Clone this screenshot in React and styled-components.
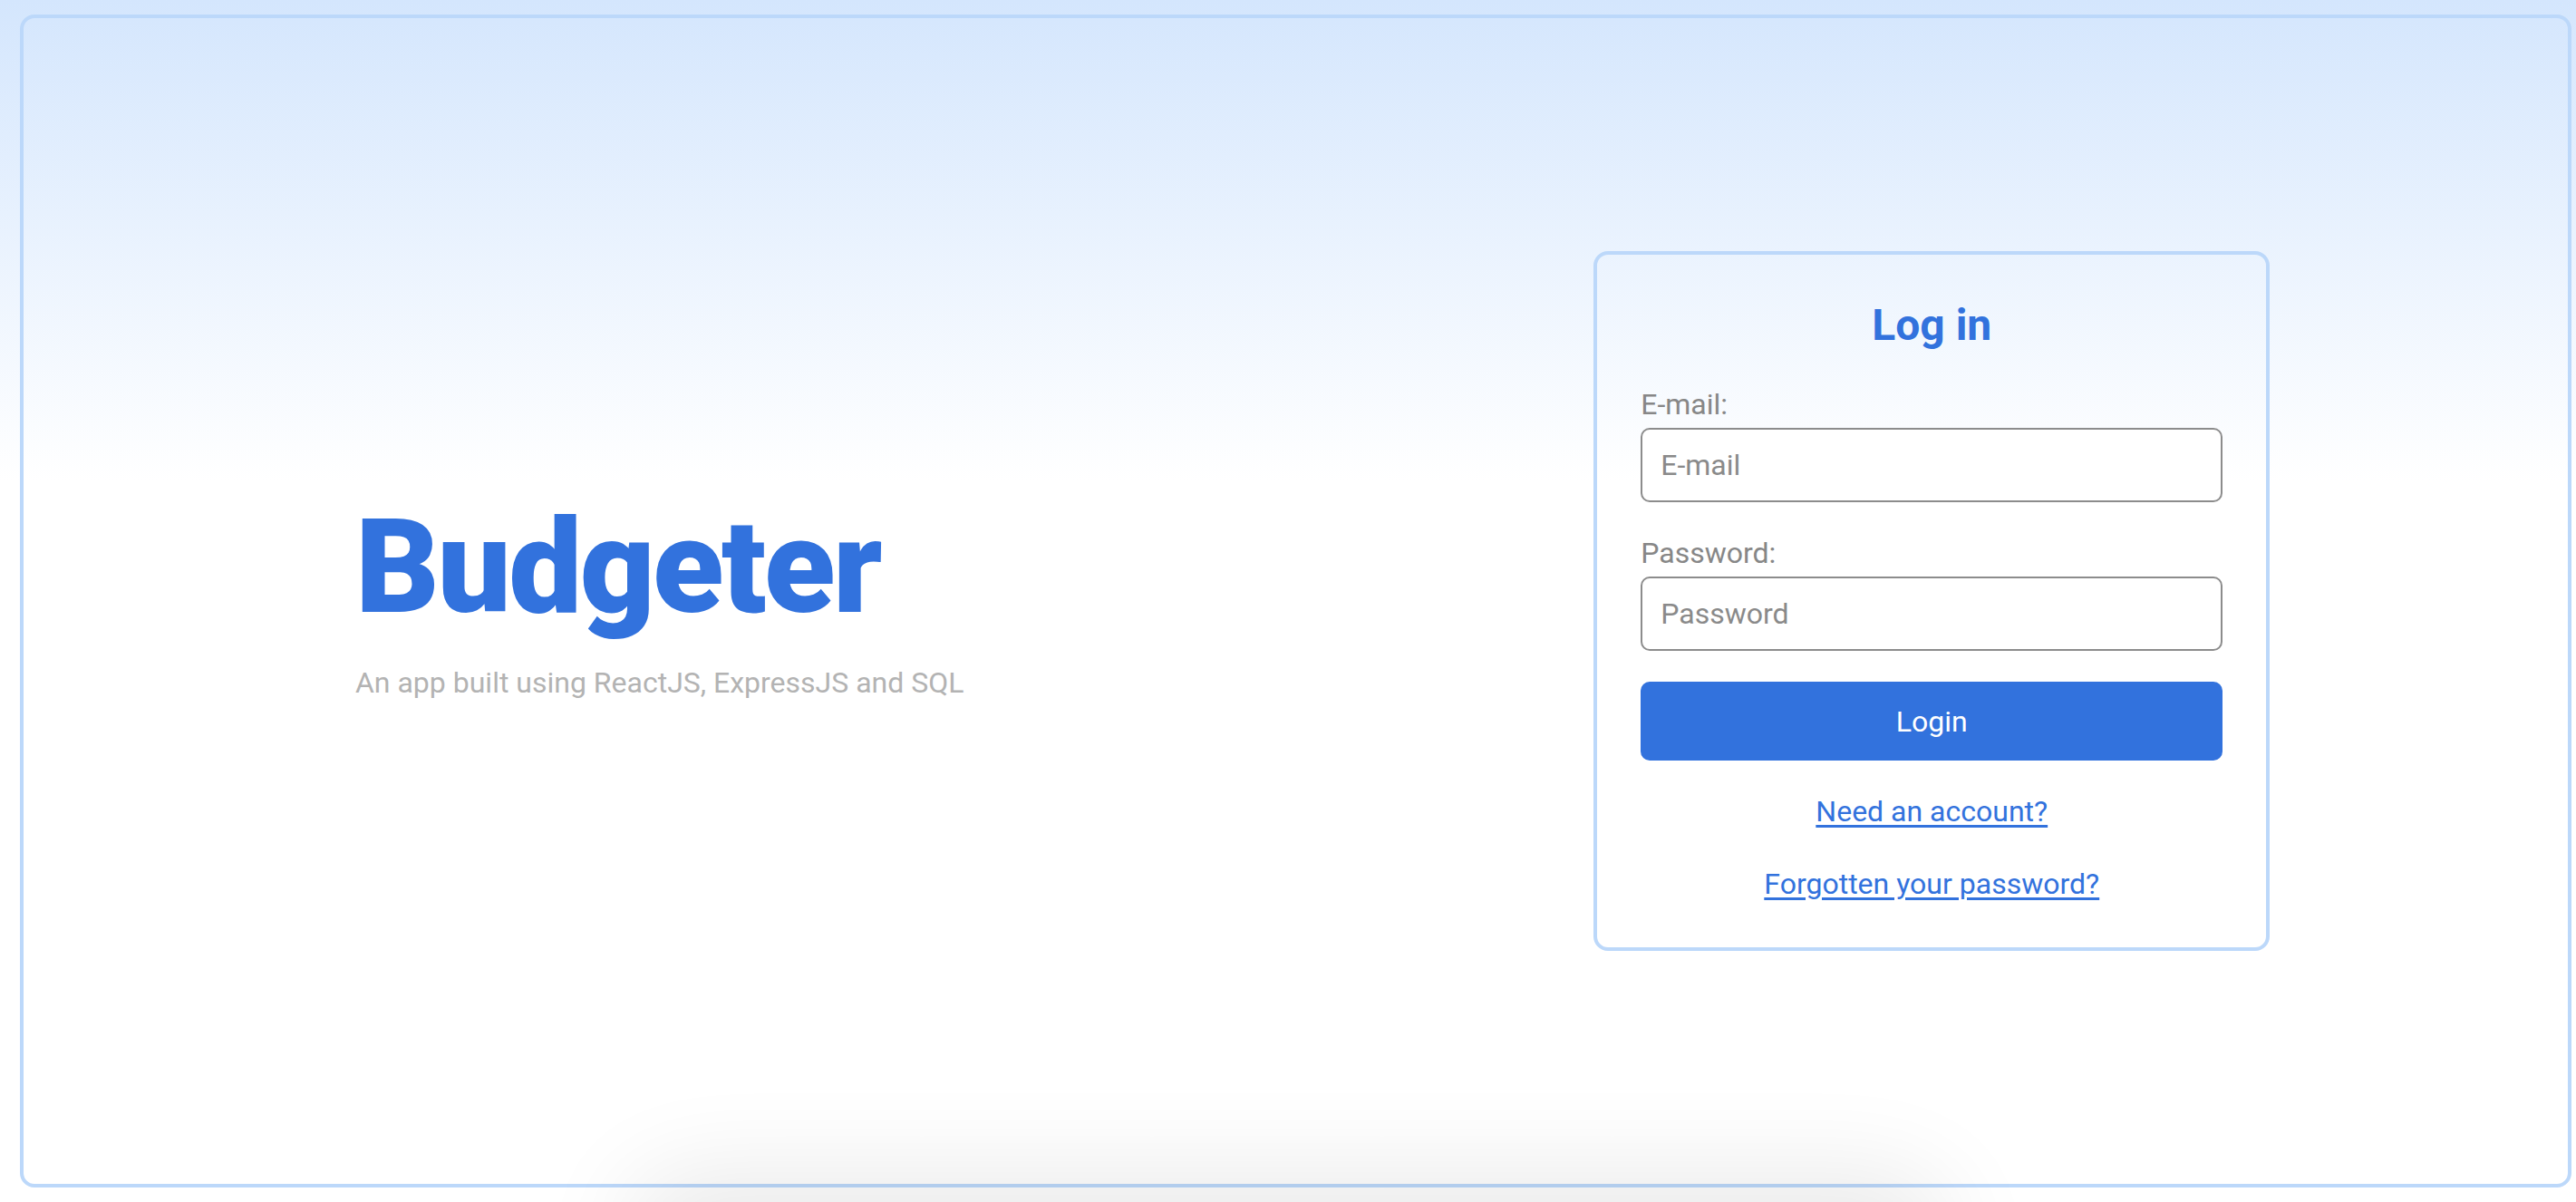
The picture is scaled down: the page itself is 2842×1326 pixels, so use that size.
import React from "react";
import styled, { createGlobalStyle } from "styled-components";

const GlobalStyle = createGlobalStyle`
  html, body {
    margin: 0;
    padding: 0;
  }
  body {
    font-family: Roboto, "Liberation Sans", Arial, sans-serif;
    background: linear-gradient(180deg, #d4e6fd 0px, #ffffff 530px, #ffffff 100%);
    background-repeat: no-repeat;
    background-color: #ffffff;
  }
  * {
    box-sizing: border-box;
  }
`;

const Page = styled.div`
  position: relative;
  height: 100vh;
  overflow: hidden;
  padding: 16px 5px 16px 22px;
  display: flex;

  &::after {
    content: "";
    position: absolute;
    left: 50%;
    top: 100%;
    width: 1400px;
    height: 80px;
    transform: translateX(-50%);
    border-radius: 40px;
    box-shadow: 0 0 110px 30px rgba(0, 0, 0, 0.09);
  }
`;

const Frame = styled.main`
  flex: 1;
  display: flex;
  border: 4px solid #bcd8fa;
  border-radius: 16px;
`;

const Column = styled.section`
  flex: 1;
  display: flex;
  align-items: center;
  justify-content: center;
`;

const Intro = styled.div`
  display: flex;
  flex-direction: column;
`;

const Brand = styled.h1`
  margin: 0;
  font-size: 144px;
  line-height: 144px;
  font-weight: 900;
  letter-spacing: -2.5px;
  color: #3272dd;
`;

const Tagline = styled.p`
  margin: 35px 0 0;
  font-size: 32px;
  line-height: 40px;
  color: #b3b3b3;
`;

const Card = styled.form`
  width: 746px;
  padding: 50px 48px 50px;
  border: 4px solid #bcd8fa;
  border-radius: 16px;
  display: flex;
  flex-direction: column;
`;

const Title = styled.h2`
  margin: 0 0 39px;
  text-align: center;
  font-size: 48px;
  line-height: 56px;
  font-weight: 700;
  color: #3272dd;
`;

const Label = styled.label`
  display: block;
  margin: ${(p) => (p.$first ? "0" : "36px")} 0 6px;
  font-size: 32px;
  line-height: 40px;
  color: #878787;
`;

const Input = styled.input`
  display: block;
  width: 100%;
  height: 82px;
  padding: 0 20px;
  border: 2px solid #8c8c8c;
  border-radius: 10px;
  background: #ffffff;
  font-family: inherit;
  font-size: 32px;
  color: #333333;
  outline: none;

  &::placeholder {
    color: #8a8a8a;
  }
`;

const Button = styled.button`
  margin-top: 34px;
  height: 87px;
  border: none;
  border-radius: 10px;
  background: #3272dd;
  color: #ffffff;
  font-family: inherit;
  font-size: 32px;
  cursor: pointer;
`;

const LinkText = styled.a`
  display: block;
  margin-top: ${(p) => p.$gap}px;
  text-align: center;
  font-size: 32px;
  line-height: 40px;
  color: #3272dd;
  text-decoration: underline;
  text-underline-offset: 4px;
`;

export default function App() {
  return (
    <>
      <GlobalStyle />
      <Page>
        <Frame>
          <Column>
            <Intro>
              <Brand>Budgeter</Brand>
              <Tagline>An app built using ReactJS, ExpressJS and SQL</Tagline>
            </Intro>
          </Column>
          <Column>
            <Card onSubmit={(e) => e.preventDefault()}>
              <Title>Log in</Title>
              <Label $first htmlFor="email">E-mail:</Label>
              <Input id="email" type="email" placeholder="E-mail" />
              <Label htmlFor="password">Password:</Label>
              <Input id="password" type="password" placeholder="Password" />
              <Button type="submit">Login</Button>
              <LinkText href="#" $gap={36}>Need an account?</LinkText>
              <LinkText href="#" $gap={40}>Forgotten your password?</LinkText>
            </Card>
          </Column>
        </Frame>
      </Page>
    </>
  );
}
